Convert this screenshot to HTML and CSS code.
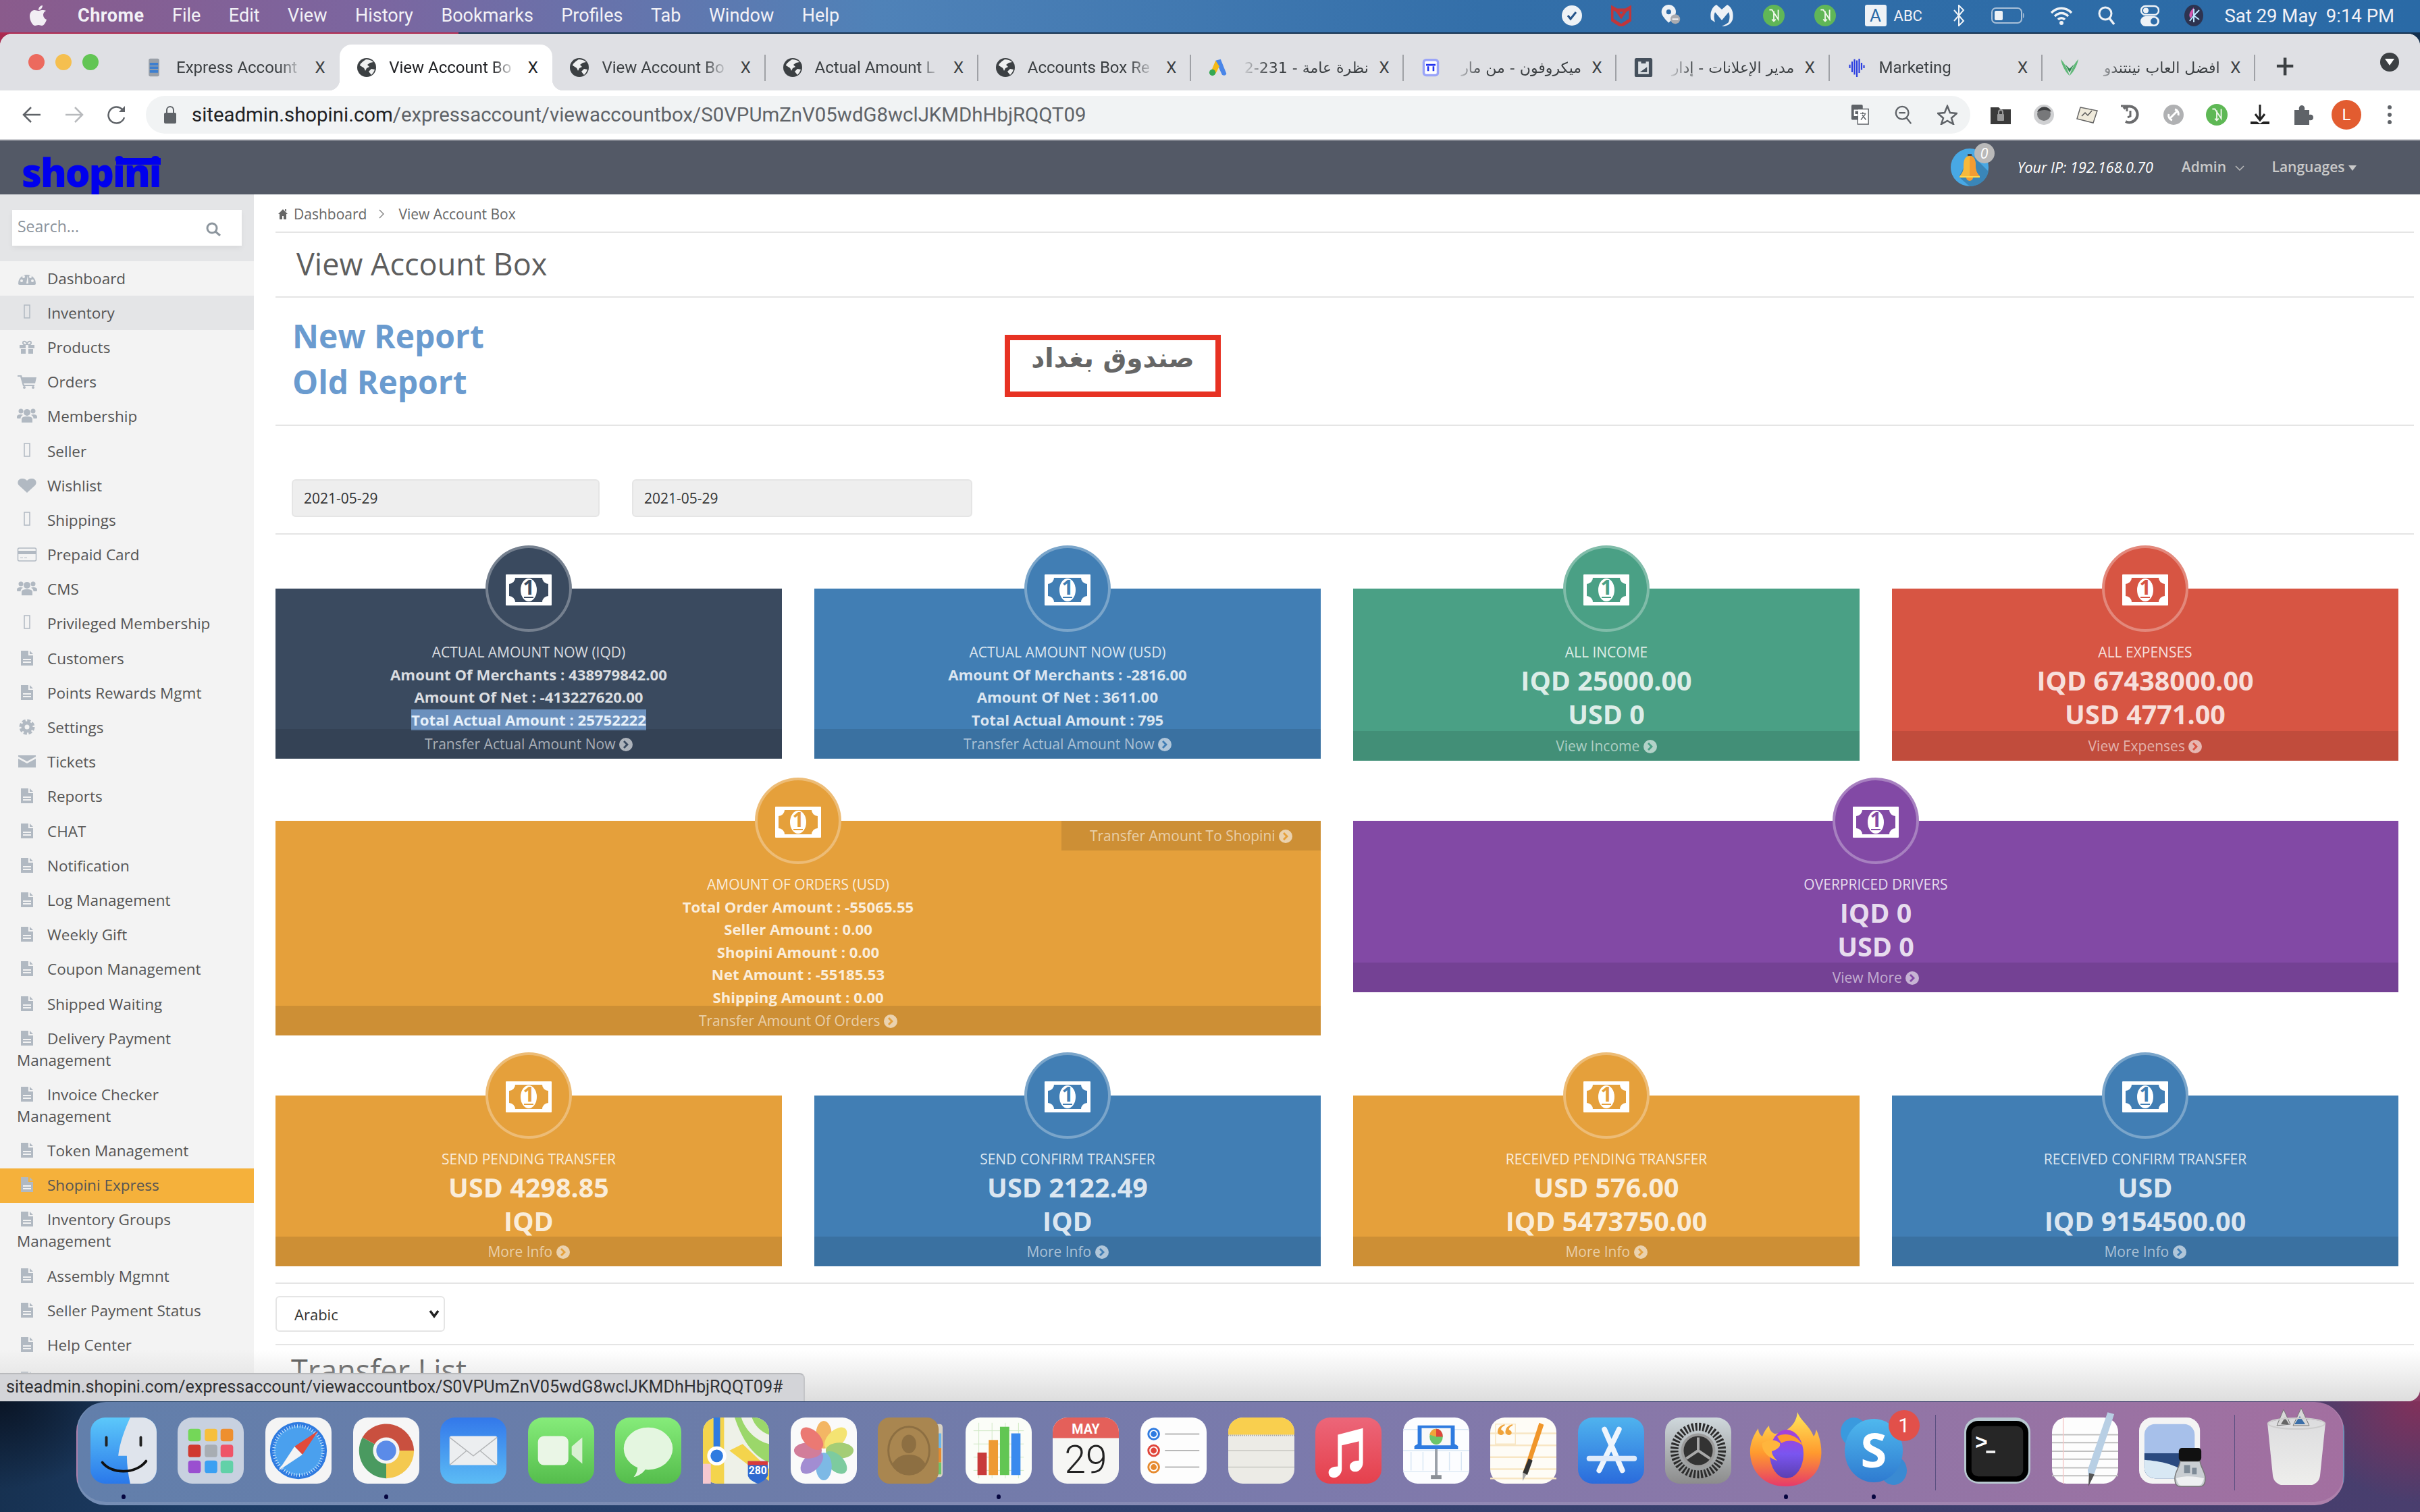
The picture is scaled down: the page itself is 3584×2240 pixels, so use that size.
FILE: index.html
```html
<!DOCTYPE html>
<html lang="en">
<head>
<meta charset="utf-8">
<title>View Account Box</title>
<link rel="stylesheet" href="styles.css">
</head>
<body>
<svg class="defs" aria-hidden="true">
  <defs>
    <linearGradient id="g-finder" x1="0" y1="0" x2="0" y2="1"><stop offset="0" stop-color="#5cc8fa"/><stop offset="1" stop-color="#2a78ea"/></linearGradient>
    <linearGradient id="g-mail" x1="0" y1="0" x2="0" y2="1"><stop offset="0" stop-color="#3378ea"/><stop offset="1" stop-color="#5cbcf5"/></linearGradient>
    <linearGradient id="g-green" x1="0" y1="0" x2="0" y2="1"><stop offset="0" stop-color="#86ec7a"/><stop offset="1" stop-color="#55bd4c"/></linearGradient>
    <linearGradient id="g-music" x1="0" y1="0" x2="0" y2="1"><stop offset="0" stop-color="#ec6679"/><stop offset="1" stop-color="#e5404c"/></linearGradient>
    <linearGradient id="g-store" x1="0" y1="0" x2="0" y2="1"><stop offset="0" stop-color="#4fb3ee"/><stop offset="1" stop-color="#2a6bdc"/></linearGradient>
    <linearGradient id="g-skype" x1="0" y1="0" x2="0" y2="1"><stop offset="0" stop-color="#4fb8ee"/><stop offset="1" stop-color="#2f7bd0"/></linearGradient>
    <linearGradient id="g-fox" x1="0" y1="0" x2="0" y2="1"><stop offset="0" stop-color="#ffe85a"/><stop offset=".55" stop-color="#ff9a2e"/><stop offset="1" stop-color="#e63a6a"/></linearGradient>
    <linearGradient id="g-fox2" x1="0" y1="0" x2="0" y2="1"><stop offset="0" stop-color="#a83fd8"/><stop offset=".5" stop-color="#7a55f0"/><stop offset="1" stop-color="#5b3fb0"/></linearGradient>
    <linearGradient id="g-prefs" x1="0" y1="0" x2="0" y2="1"><stop offset="0" stop-color="#cfd8dc"/><stop offset="1" stop-color="#8c8c8c"/></linearGradient>
    <linearGradient id="g-trash" x1="0" y1="0" x2="0" y2="1"><stop offset="0" stop-color="#dcdcde"/><stop offset="1" stop-color="#eeeeec"/></linearGradient>
    <symbol id="i-dash" viewBox="0 0 30 24"><path d="M2 20a13 13 0 1 1 26 0c0 1-.6 2-2 2H4c-1.400 0-2-1-2-2z"/><circle cx="7" cy="16" r="2" fill="#f3f3f3"/><circle cx="10" cy="10" r="2" fill="#f3f3f3"/><circle cx="20" cy="10" r="2" fill="#f3f3f3"/><circle cx="23" cy="16" r="2" fill="#f3f3f3"/><path d="M14 20l2-12 1 12z" fill="#f3f3f3"/></symbol>
    <symbol id="i-gift" viewBox="0 0 30 24"><path d="M4 9h22v5H4zM6 15h18v7H6z"/><path d="M10 4c3-1 5 2 5 5-3 0-6-1-6-3 0-1 0-2 1-2zM20 4c-3-1-5 2-5 5 3 0 6-1 6-3 0-1 0-2-1-2z" fill="none" stroke="currentColor" stroke-width="2"/><path d="M13 9h4v13h-4z" fill="#f3f3f3"/></symbol>
    <symbol id="i-cart" viewBox="0 0 30 24"><path d="M1 3h6l1 3h21l-2 9H10l1 2h15v2H9L5 5H1z"/><circle cx="11" cy="21" r="2"/><circle cx="24" cy="21" r="2"/></symbol>
    <symbol id="i-users" viewBox="0 0 30 24"><circle cx="15" cy="7" r="5"/><circle cx="6" cy="5" r="3.500"/><circle cx="24" cy="5" r="3.500"/><path d="M7 22v-5c0-3 3-4 8-4s8 1 8 4v5z"/><path d="M0 14c0-3 2-4 6-4 1 0 2 .3 3 .8C7 12 5.500 13.500 5.500 16H1c-.6 0-1-.8-1-2zM30 14c0-3-2-4-6-4-1 0-2 .3-3 .8 2 1.200 3.500 2.700 3.500 5.200H29c.6 0 1-.8 1-2z"/></symbol>
    <symbol id="i-heart" viewBox="0 0 30 24"><path d="M15 23L3 12C0 9 1 2 8 2c3 0 5 1 7 3 2-2 4-3 7-3 7 0 8 7 5 10z"/></symbol>
    <symbol id="i-card" viewBox="0 0 30 24"><rect x="1.500" y="3" width="27" height="19" rx="2" fill="none" stroke="currentColor" stroke-width="1.500"/><path d="M1 7h28v5H1zM5 17h4v1H5zM11 17h4v1h-4z"/></symbol>
    <symbol id="i-file" viewBox="0 0 30 24"><path d="M6 1h11v7h7v15H6z"/><path d="M19 1l5 5h-5z"/><path d="M9 13h12v2H9zM9 17h12v2H9z" fill="#f3f3f3"/></symbol>
    <symbol id="i-gear" viewBox="0 0 30 24"><circle cx="15" cy="12" r="6" fill="none" stroke="currentColor" stroke-width="5"/><circle cx="15" cy="12" r="9.500" fill="none" stroke="currentColor" stroke-width="4" stroke-dasharray="5 2.460"/></symbol>
    <symbol id="i-mail" viewBox="0 0 30 24"><path d="M2 3h26v2L15 12 2 5zM2 8l13 7 13-7v13H2z"/></symbol>
    <symbol id="i-tofu" viewBox="0 0 30 24"><rect x="11" y="1" width="8" height="19" fill="none" stroke="currentColor" stroke-width="1.500"/></symbol>
    <symbol id="i-money" viewBox="0 0 68 46"><rect width="68" height="46" rx="1" fill="#fff"/><path d="M14 5H54a9 9 0 0 0 9 9V32a9 9 0 0 0-9 9H14a9 9 0 0 0-9-9V14a9 9 0 0 0 9-9Z" fill="currentColor"/><ellipse cx="34" cy="23" rx="12" ry="17" fill="#fff"/><text x="34" y="30" text-anchor="middle" class="money-digit" fill="currentColor">1</text><path d="M27 33h14v2H27z" fill="currentColor"/></symbol>
    <symbol id="i-go" viewBox="0 0 20 20"><circle cx="10" cy="10" r="10" fill="currentColor"/><path d="M8 4l6 6-6 6-2-2 4-4-4-4z" fill="var(--chev,#3a4a5f)"/></symbol>
    <symbol id="i-globe" viewBox="0 0 28 28"><circle cx="14" cy="14" r="14" fill="#3c4043"/><path d="M13 2c-4 3-8 5-9 9l5 3c2 1 2 3 3 5l2-4 4-2-3-3 4-3 5-1c-3-3-7-4-11-4zM17 20l4 5c2-2 4-5 5-8l-5-1z" fill="#fff" opacity=".92"/></symbol>
  </defs>
</svg>

<header class="menubar">
  <svg class="apple" viewBox="0 0 26 30"><path fill="#f2eef4" d="M18 7c-2 0-3 1-5 1S9 7 7 7C3 7 0 11 0 16c0 6 4 14 8 14 2 0 3-1 5-1s3 1 5 1c3 0 6-5 7-9-3-1-5-4-5-7 0-3 2-5 4-6-1-1-3-1-6-1zM13 7c0-4 3-7 6-7 0 4-3 7-6 7z"/></svg>
  <nav class="menus">
    <span class="menu-app">Chrome</span><span>File</span><span>Edit</span><span>View</span><span>History</span><span>Bookmarks</span><span>Profiles</span><span>Tab</span><span>Window</span><span>Help</span>
  </nav>
  <div class="status-icons">
    <div class="status-left">
      <svg class="si w32" viewBox="0 0 32 32"><circle cx="16" cy="16" r="15" fill="#eef2f6"/><path d="M10 16l4 5 8-10" fill="none" stroke="#26558a" stroke-width="3"/></svg>
      <svg class="si w30" viewBox="0 0 30 32"><path d="M1 4l7 4h14l7-4v18l-14 9L1 22z" fill="none" stroke="#c0363a" stroke-width="5"/><path d="M8 8l7 10 7-10" fill="none" stroke="#c0363a" stroke-width="4"/></svg>
      <svg class="si w32" viewBox="0 0 32 36"><path d="M13 0a12 12 0 0 1 12 12c0 6-7 13-12 18C8 25 1 18 1 12A12 12 0 0 1 13 0z" fill="#eef2f6"/><circle cx="13" cy="12" r="4" fill="#2e6ca8"/><circle cx="24" cy="24" r="8" fill="#a9abb0"/><path d="M19 24h10" stroke="#fff" stroke-width="2"/></svg>
      <svg class="si w36" viewBox="0 0 36 32"><path d="M18 7L10 0C3 4 0 12 2 22l6 4c-2-6-2-11 0-15l10 12 10-12c2 4 2 9 0 15-2 2-6 4-10 6l3 0c6-1 11-4 13-10 2-10-1-18-8-22z" fill="#eef2f6"/></svg>
      <svg class="si w34" viewBox="0 0 34 34"><circle cx="17" cy="17" r="17" fill="#60b657"/><path d="M10 8h4l10 15V8M17 10v16m-3-3l3 3 3-3" fill="none" stroke="#eef6ea" stroke-width="2"/></svg>
      <svg class="si w34" viewBox="0 0 34 34"><circle cx="17" cy="17" r="17" fill="#60b657"/><path d="M10 8h4l10 15V8M17 10v16m-3-3l3 3 3-3" fill="none" stroke="#eef6ea" stroke-width="2"/></svg>
      <div class="input-source"><span class="si-a">A</span><span class="si-abc">ABC</span></div>
    </div>
    <div class="status-right">
      <svg class="si w22" viewBox="0 0 22 32"><path d="M4 8l14 16-7 7V1l7 7L4 24" fill="none" stroke="#eef2f6" stroke-width="2"/></svg>
      <svg class="si w50" viewBox="0 0 50 26"><rect x="1" y="2" width="44" height="22" rx="6" fill="none" stroke="#a9c0d8" stroke-width="2"/><rect x="5" y="6" width="12" height="14" rx="2" fill="#eef2f6"/><path d="M47 9c2 1 2 7 0 8z" fill="#a9c0d8"/></svg>
      <svg class="si w34" viewBox="0 0 34 28"><path d="M2 10c9-9 21-9 30 0M7 15c6-6 14-6 20 0M12 20c3-3 7-3 10 0" fill="none" stroke="#eef2f6" stroke-width="3.500"/><circle cx="17" cy="25" r="3" fill="#eef2f6"/></svg>
      <svg class="si w26" viewBox="0 0 26 28"><circle cx="11" cy="11" r="9" fill="none" stroke="#eef2f6" stroke-width="3"/><path d="M17 18l7 9" stroke="#eef2f6" stroke-width="3.500"/></svg>
      <svg class="si w28" viewBox="0 0 28 32"><rect x="1" y="2" width="26" height="13" rx="6.500" fill="none" stroke="#eef2f6" stroke-width="2.500"/><circle cx="8" cy="8.500" r="4" fill="#eef2f6"/><rect y="17" width="28" height="15" rx="7.500" fill="#eef2f6"/><circle cx="20" cy="24.500" r="5" fill="#2e6ca8"/></svg>
      <svg class="si w28" viewBox="0 0 28 32"><ellipse cx="14" cy="16" rx="14" ry="16" fill="#2d3350"/><path d="M14 4c-5 5-9 11-5 16 3-2 4-8 5-16z" fill="#d45ab0"/><path d="M14 16L22 8M14 16l8 6M14 16L8 24M14 6v20" stroke="#bfe6ff" stroke-width="2"/></svg>
    </div>
    <span class="clock">Sat 29 May&nbsp; 9:14 PM</span>
  </div>
</header>

<main class="window">
  <div class="tabstrip">
    <div class="lights"><i class="light red"></i><i class="light amber"></i><i class="light green"></i></div>
    <div class="tab">
      <svg class="fav" viewBox="0 0 28 36"><rect x="4" y="1" width="20" height="34" rx="3" fill="#9aa0a8"/><path d="M6 9h16v5H6zM6 16h16v5H6zM6 23h16v5H6z" fill="#3d7fd0"/></svg>
      <span class="tab-title">Express Account</span><span class="tab-x">X</span>
    </div>
    <div class="tab tab-active">
      <svg class="fav"><use href="#i-globe"/></svg>
      <span class="tab-title">View Account Bo</span><span class="tab-x">X</span>
    </div>
    <div class="tab tab-sep">
      <svg class="fav"><use href="#i-globe"/></svg>
      <span class="tab-title">View Account Bo</span><span class="tab-x">X</span>
    </div>
    <div class="tab tab-sep">
      <svg class="fav"><use href="#i-globe"/></svg>
      <span class="tab-title">Actual Amount L</span><span class="tab-x">X</span>
    </div>
    <div class="tab tab-sep">
      <svg class="fav"><use href="#i-globe"/></svg>
      <span class="tab-title">Accounts Box Re</span><span class="tab-x">X</span>
    </div>
    <div class="tab tab-sep">
      <svg class="fav" viewBox="0 0 30 28"><path d="M11 3l8-2 9 22c1 3-5 5-7 2z" fill="#4a86e8"/><path d="M11 3l6 9-6 12-7-4z" fill="#f5ba18"/><circle cx="6" cy="22" r="5" fill="#34a853"/></svg>
      <span class="tab-title tab-rtl" dir="rtl">نظرة عامة - 231-2</span><span class="tab-x">X</span>
    </div>
    <div class="tab tab-sep">
      <svg class="fav" viewBox="0 0 30 32"><rect x="1" y="1" width="28" height="30" rx="6" fill="#9aa4f8"/><rect x="5" y="5" width="20" height="22" rx="2" fill="#fff"/><path d="M7 10h16v3H7zM9 14h3v8H9zM18 14h3v8h-3z" fill="#2233ee"/></svg>
      <span class="tab-title tab-rtl" dir="rtl">ميكروفون - من مار</span><span class="tab-x">X</span>
    </div>
    <div class="tab tab-sep">
      <svg class="fav" viewBox="0 0 30 32"><rect width="30" height="32" rx="3" fill="#45505c"/><path d="M6 6h18v21H6z" fill="#dde1e5"/><path d="M11 3h8v6h-8z" fill="#45505c"/><path d="M9 24l12-9v9z" fill="#45505c"/></svg>
      <span class="tab-title tab-rtl" dir="rtl">مدير الإعلانات - إدار</span><span class="tab-x">X</span>
    </div>
    <div class="tab tab-sep">
      <svg class="fav" viewBox="0 0 28 32"><path d="M2 11v6M6 6v18M10 2v26M14 4v28M18 1v24M22 8v12M26 12v5" stroke="#2b3fe0" stroke-width="2.500"/></svg>
      <span class="tab-title">Marketing</span><span class="tab-x">X</span>
    </div>
    <div class="tab tab-sep">
      <svg class="fav" viewBox="0 0 30 28"><path d="M1 1c6 6 10 14 14 26C19 15 23 7 29 1c-2 10-7 20-14 26C8 21 3 11 1 1z" fill="#5fb878"/><path d="M8 9l7 13 7-13-7 7z" fill="#2f8a50"/></svg>
      <span class="tab-title tab-rtl" dir="rtl">افضل العاب نينتندو</span><span class="tab-x">X</span>
    </div>
    <span class="tab-plus">+</span>
    <span class="tab-menu"><i class="tab-menu-caret"></i></span>
  </div>

  <div class="toolbar">
    <svg class="tb tb-nav" viewBox="0 0 30 30"><path d="M28 15H4M14 4L3 15l11 11" fill="none" stroke="#5f6368" stroke-width="2.500"/></svg>
    <svg class="tb tb-nav" viewBox="0 0 30 30"><path d="M2 15h24M16 4l11 11-11 11" fill="none" stroke="#b8babd" stroke-width="2.500"/></svg>
    <svg class="tb tb-nav" viewBox="0 0 30 30"><path d="M26 19a12 12 0 1 1-3-12l3 3" fill="none" stroke="#5f6368" stroke-width="2.500"/><path d="M27 2v9h-9z" fill="#5f6368"/></svg>
    <div class="omnibox">
      <svg class="lock" viewBox="0 0 20 26"><rect y="10" width="18" height="16" rx="2" fill="#5f6368"/><path d="M4 10V6a5 5 0 0 1 10 0v4" fill="none" stroke="#5f6368" stroke-width="2"/></svg>
      <span class="url"><b class="url-host">siteadmin.shopini.com</b>/expressaccount/viewaccountbox/S0VPUmZnV05wdG8wclJKMDhHbjRQQT09</span>
      <div class="omni-actions">
        <svg class="tb w28" viewBox="0 0 28 32"><rect width="18" height="24" rx="2" fill="#5f6368"/><path d="M10 7h17v24H10z" fill="#fff" stroke="#5f6368" stroke-width="1.500"/><path d="M14 14h9M18 12v3M15 24l7-9M17 16l6 8" stroke="#5f6368" stroke-width="1.500"/><path d="M4 8h7v2H6v5h4v3H4z" fill="#fff"/></svg>
        <svg class="tb w28" viewBox="0 0 28 32"><circle cx="12" cy="13" r="10" fill="none" stroke="#5f6368" stroke-width="2.500"/><path d="M7 13h10M19 21l7 9" stroke="#5f6368" stroke-width="2.500"/></svg>
        <svg class="tb w30" viewBox="0 0 30 30"><path d="M15 2l4 10 10 1-8 7 3 9-9-5-9 5 3-9-8-7 10-1z" fill="none" stroke="#5f6368" stroke-width="2.500"/></svg>
      </div>
    </div>
    <div class="extensions">
      <svg class="ext" viewBox="0 0 32 32"><path d="M1 5h12l3 3h15v22H1z" fill="#3a3a3a"/><rect x="11" y="15" width="10" height="10" rx="1" fill="#999"/><path d="M13 15v-3a3 3 0 0 1 6 0v3" fill="none" stroke="#999" stroke-width="2"/></svg>
      <svg class="ext" viewBox="0 0 32 32"><circle cx="16" cy="16" r="15" fill="#cfd0d2"/><circle cx="16" cy="15" r="10" fill="#77787a"/><path d="M6 12a11 11 0 0 1 21 0c-6-4-14-4-21 0z" fill="#3f4042"/></svg>
      <svg class="ext" viewBox="0 0 32 32"><path d="M6 5l25 5-6 18-24-6z" fill="#efeadb" stroke="#666" stroke-width="1.500"/><path d="M8 18l5-5 4 4 6-7" fill="none" stroke="#555" stroke-width="1.500"/></svg>
      <svg class="ext" viewBox="0 0 32 32"><path d="M6 7a12 12 0 1 1 3 19" fill="none" stroke="#6a6b6d" stroke-width="4"/><path d="M2 3h9v8" fill="none" stroke="#6a6b6d" stroke-width="3"/><path d="M16 10v8l-4 2" fill="none" stroke="#6a6b6d" stroke-width="3"/></svg>
      <svg class="ext" viewBox="0 0 32 32"><circle cx="16" cy="16" r="15" fill="#b0b1b3"/><path d="M10 22L22 10M18 8a7 7 0 0 1 5 9M14 24a7 7 0 0 1-5-9" fill="none" stroke="#fff" stroke-width="3"/></svg>
      <svg class="ext" viewBox="0 0 34 34"><circle cx="17" cy="17" r="17" fill="#5eb855"/><path d="M10 8h4l10 15V8M17 10v16m-3-3l3 3 3-3" fill="none" stroke="#eef6ea" stroke-width="2"/></svg>
      <svg class="ext" viewBox="0 0 32 32"><path d="M16 1v22M9 15l7 9 7-9" fill="none" stroke="#222" stroke-width="3"/><path d="M2 26h9l5 3 5-3h9v4H2z" fill="#222"/></svg>
      <svg class="ext" viewBox="0 0 32 32"><path d="M3 9h7c-1-4 1-7 4-7s5 3 4 7h7v7c4-1 6 1 6 4s-2 5-6 4v7H3z" fill="#5f6368"/></svg>
      <span class="avatar">L</span>
      <span class="kebab"><i></i><i></i><i></i></span>
    </div>
  </div>

  <div class="topbar">
    <a class="logo">shopini</a>
    <div class="topbar-right">
      <div class="bell">
        <svg viewBox="0 0 56 56"><circle cx="28" cy="28" r="28" fill="#48a8e4"/><path d="M30 8l26 26A28 28 0 0 1 28 56L12 42z" fill="#3a86b8"/><rect x="25" y="8" width="6" height="6" fill="#444"/><path d="M28 11c-8 0-9 8-9 16 0 7-3 11-6 14h30c-3-3-6-7-6-14 0-8-1-16-9-16z" fill="#f6b93b"/><path d="M28 11c8 0 9 8 9 16 0 7 3 11 6 14H28z" fill="#f39c33"/><path d="M13 41h30v2H13z" fill="#ffd84d"/><path d="M23 43h10a5 5 0 0 1-10 0z" fill="#f39c33"/></svg>
        <span class="bell-count">0</span>
      </div>
      <span class="ip">Your IP: 192.168.0.70</span>
      <span class="top-link">Admin <svg class="chev-sm" viewBox="0 0 14 8"><path d="M1 1l6 6 6-6" fill="none" stroke="#bbb" stroke-width="1.500"/></svg></span>
      <span class="top-link">Languages <i class="caret"></i></span>
    </div>
  </div>

  <div class="page">
    <aside class="sidebar">
      <div class="search">
        <div class="search-box"><span>Search...</span><svg viewBox="0 0 24 22"><circle cx="10" cy="9" r="7" fill="none" stroke="#8d969e" stroke-width="3"/><path d="M15 14l7 6" stroke="#8d969e" stroke-width="3"/></svg></div>
      </div>
      <nav class="nav">
        <a class="nav-item"><svg><use href="#i-dash"/></svg>Dashboard</a>
        <a class="nav-item nav-hover"><svg><use href="#i-tofu"/></svg>Inventory</a>
        <a class="nav-item"><svg><use href="#i-gift"/></svg>Products</a>
        <a class="nav-item"><svg><use href="#i-cart"/></svg>Orders</a>
        <a class="nav-item"><svg><use href="#i-users"/></svg>Membership</a>
        <a class="nav-item"><svg><use href="#i-tofu"/></svg>Seller</a>
        <a class="nav-item"><svg><use href="#i-heart"/></svg>Wishlist</a>
        <a class="nav-item"><svg><use href="#i-tofu"/></svg>Shippings</a>
        <a class="nav-item"><svg><use href="#i-card"/></svg>Prepaid Card</a>
        <a class="nav-item"><svg><use href="#i-users"/></svg>CMS</a>
        <a class="nav-item"><svg><use href="#i-tofu"/></svg>Privileged Membership</a>
        <a class="nav-item"><svg><use href="#i-file"/></svg>Customers</a>
        <a class="nav-item"><svg><use href="#i-file"/></svg>Points Rewards Mgmt</a>
        <a class="nav-item"><svg><use href="#i-gear"/></svg>Settings</a>
        <a class="nav-item"><svg><use href="#i-mail"/></svg>Tickets</a>
        <a class="nav-item"><svg><use href="#i-file"/></svg>Reports</a>
        <a class="nav-item"><svg><use href="#i-file"/></svg>CHAT</a>
        <a class="nav-item"><svg><use href="#i-file"/></svg>Notification</a>
        <a class="nav-item"><svg><use href="#i-file"/></svg>Log Management</a>
        <a class="nav-item"><svg><use href="#i-file"/></svg>Weekly Gift</a>
        <a class="nav-item"><svg><use href="#i-file"/></svg>Coupon Management</a>
        <a class="nav-item"><svg><use href="#i-file"/></svg>Shipped Waiting</a>
        <a class="nav-item"><svg><use href="#i-file"/></svg>Delivery Payment Management</a>
        <a class="nav-item"><svg><use href="#i-file"/></svg>Invoice Checker Management</a>
        <a class="nav-item"><svg><use href="#i-file"/></svg>Token Management</a>
        <a class="nav-item nav-active"><svg><use href="#i-file"/></svg>Shopini Express</a>
        <a class="nav-item"><svg><use href="#i-file"/></svg>Inventory Groups Management</a>
        <a class="nav-item"><svg><use href="#i-file"/></svg>Assembly Mgmnt</a>
        <a class="nav-item"><svg><use href="#i-file"/></svg>Seller Payment Status</a>
        <a class="nav-item"><svg><use href="#i-file"/></svg>Help Center</a>
        <a class="nav-item"><svg><use href="#i-file"/></svg></a>
      </nav>
    </aside>

    <section class="content">
      <div class="crumbs">
        <svg class="home" viewBox="0 0 14 16"><path d="M7 1l7 7h-2v8H8v-5H6v5H2V8H0zM10 1h2v4l-2-2z" fill="#666"/></svg>
        <span>Dashboard</span><svg class="crumb-sep" viewBox="0 0 8 14"><path d="M1 1l6 6-6 6" fill="none" stroke="#777" stroke-width="1.200"/></svg><span>View Account Box</span>
      </div>
      <h1 class="title">View Account Box</h1>
      <div class="reports">
        <div class="report-links">
          <a>New Report</a>
          <a>Old Report</a>
        </div>
        <div class="box-name" dir="rtl">صندوق بغداد</div>
      </div>
      <div class="filters">
        <input class="date date-a" value="2021-05-29" readonly>
        <input class="date date-b" value="2021-05-29" readonly>
      </div>

      <div class="cards">
        <article class="card navy h252">
          <span class="coin"><svg><use href="#i-money"/></svg></span>
          <div class="card-body">
            <p class="card-title">ACTUAL AMOUNT NOW (IQD)</p>
            <p class="line">Amount Of Merchants : 438979842.00</p>
            <p class="line">Amount Of Net : -413227620.00</p>
            <p class="line"><span class="selected">Total Actual Amount : 25752222</span></p>
          </div>
          <a class="card-foot">Transfer Actual Amount Now <svg><use href="#i-go"/></svg></a>
        </article>
        <article class="card blue h252">
          <span class="coin"><svg><use href="#i-money"/></svg></span>
          <div class="card-body">
            <p class="card-title">ACTUAL AMOUNT NOW (USD)</p>
            <p class="line">Amount Of Merchants : -2816.00</p>
            <p class="line">Amount Of Net : 3611.00</p>
            <p class="line">Total Actual Amount : 795</p>
          </div>
          <a class="card-foot">Transfer Actual Amount Now <svg><use href="#i-go"/></svg></a>
        </article>
        <article class="card green h255">
          <span class="coin"><svg><use href="#i-money"/></svg></span>
          <div class="card-body">
            <p class="card-title">ALL INCOME</p>
            <p class="big">IQD 25000.00</p>
            <p class="big">USD 0</p>
          </div>
          <a class="card-foot">View Income <svg><use href="#i-go"/></svg></a>
        </article>
        <article class="card red h255">
          <span class="coin"><svg><use href="#i-money"/></svg></span>
          <div class="card-body">
            <p class="card-title">ALL EXPENSES</p>
            <p class="big">IQD 67438000.00</p>
            <p class="big">USD 4771.00</p>
          </div>
          <a class="card-foot">View Expenses <svg><use href="#i-go"/></svg></a>
        </article>

        <article class="card orange wide h318">
          <span class="coin"><svg><use href="#i-money"/></svg></span>
          <a class="card-corner">Transfer Amount To Shopini <svg><use href="#i-go"/></svg></a>
          <div class="card-body">
            <p class="card-title">AMOUNT OF ORDERS (USD)</p>
            <p class="line">Total Order Amount : -55065.55</p>
            <p class="line">Seller Amount : 0.00</p>
            <p class="line">Shopini Amount : 0.00</p>
            <p class="line">Net Amount : -55185.53</p>
            <p class="line">Shipping Amount : 0.00</p>
          </div>
          <a class="card-foot">Transfer Amount Of Orders <svg><use href="#i-go"/></svg></a>
        </article>
        <article class="card purple wide h254">
          <span class="coin"><svg><use href="#i-money"/></svg></span>
          <div class="card-body">
            <p class="card-title">OVERPRICED DRIVERS</p>
            <p class="big">IQD 0</p>
            <p class="big">USD 0</p>
          </div>
          <a class="card-foot">View More <svg><use href="#i-go"/></svg></a>
        </article>

        <article class="card orange h253">
          <span class="coin"><svg><use href="#i-money"/></svg></span>
          <div class="card-body">
            <p class="card-title">SEND PENDING TRANSFER</p>
            <p class="big">USD 4298.85</p>
            <p class="big">IQD</p>
          </div>
          <a class="card-foot">More Info <svg><use href="#i-go"/></svg></a>
        </article>
        <article class="card blue h253">
          <span class="coin"><svg><use href="#i-money"/></svg></span>
          <div class="card-body">
            <p class="card-title">SEND CONFIRM TRANSFER</p>
            <p class="big">USD 2122.49</p>
            <p class="big">IQD</p>
          </div>
          <a class="card-foot">More Info <svg><use href="#i-go"/></svg></a>
        </article>
        <article class="card orange h253">
          <span class="coin"><svg><use href="#i-money"/></svg></span>
          <div class="card-body">
            <p class="card-title">RECEIVED PENDING TRANSFER</p>
            <p class="big">USD 576.00</p>
            <p class="big">IQD 5473750.00</p>
          </div>
          <a class="card-foot">More Info <svg><use href="#i-go"/></svg></a>
        </article>
        <article class="card blue h253">
          <span class="coin"><svg><use href="#i-money"/></svg></span>
          <div class="card-body">
            <p class="card-title">RECEIVED CONFIRM TRANSFER</p>
            <p class="big">USD</p>
            <p class="big">IQD 9154500.00</p>
          </div>
          <a class="card-foot">More Info <svg><use href="#i-go"/></svg></a>
        </article>
      </div>

      <div class="lang-row">
        <div class="lang-select">
          <select class="lang"><option>Arabic</option><option>English</option></select>
          <svg viewBox="0 0 16 16"><path d="M2 4l6 8 6-8" fill="none" stroke="#222" stroke-width="3.500"/></svg>
        </div>
      </div>
      <h2 class="list-title">Transfer List</h2>
    </section>
    <div class="bottom-fade"></div>
  </div>
  <div class="statusbar">siteadmin.shopini.com/expressaccount/viewaccountbox/S0VPUmZnV05wdG8wclJKMDhHbjRQQT09#</div>
</main>

<footer class="desk">
  <div class="dock">
    <div class="slot running"><svg class="app" viewBox="0 0 100 100"><rect width="100" height="100" rx="22" fill="url(#g-finder)"/><path d="M60 0h18a22 22 0 0 1 22 22v56a22 22 0 0 1-22 22H60c-3-14-5-28-5-42H42C44 38 52 18 60 0z" fill="#dfe4ec"/><path d="M24 30v12M76 30v12" stroke="#222" stroke-width="4" stroke-linecap="round"/><path d="M18 68c14 18 50 18 66-2" fill="none" stroke="#111" stroke-width="4" stroke-linecap="round"/></svg></div>
    <div class="slot"><svg class="app" viewBox="0 0 100 100"><rect width="100" height="100" rx="22" fill="#c8d1e0"/><g><rect x="16" y="17" width="19" height="19" rx="4" fill="#74d758"/><rect x="41" y="17" width="19" height="19" rx="4" fill="#f6bf3c"/><rect x="65" y="17" width="19" height="19" rx="4" fill="#ee8f2f"/><rect x="16" y="41" width="19" height="19" rx="4" fill="#d0392f"/><rect x="41" y="41" width="19" height="19" rx="4" fill="#a8adb3"/><rect x="65" y="41" width="19" height="19" rx="4" fill="#ef5468"/><rect x="16" y="65" width="19" height="19" rx="4" fill="#9a4fd0"/><rect x="41" y="65" width="19" height="19" rx="4" fill="#3aa0f2"/><rect x="65" y="65" width="19" height="19" rx="4" fill="#62d1a8"/></g></svg></div>
    <div class="slot"><svg class="app" viewBox="0 0 100 100"><rect width="100" height="100" rx="22" fill="#f4f4f4"/><circle cx="50" cy="50" r="43" fill="#2f7be0"/><circle cx="50" cy="50" r="37" fill="#4aa0ee" stroke="#d8ecff" stroke-width="5" stroke-dasharray="1 3"/><path d="M80 20L44 44l12 12z" fill="#e24a3b"/><path d="M20 80l24-36 12 12z" fill="#f4f4f4"/></svg></div>
    <div class="slot running"><svg class="app" viewBox="0 0 100 100"><rect width="100" height="100" rx="22" fill="#f6f6f6"/><path d="M50 50L92 50A42 42 0 0 0 14 30z" fill="#c9503f"/><path d="M50 50L50 92A42 42 0 0 0 92 50z" fill="#f4c94f"/><path d="M50 50L14 30A42 42 0 0 0 50 92z" fill="#4a9a60"/><circle cx="50" cy="50" r="20" fill="#f4f4f4"/><circle cx="50" cy="50" r="15" fill="#5b8be8"/></svg></div>
    <div class="slot"><svg class="app" viewBox="0 0 100 100"><rect width="100" height="100" rx="22" fill="url(#g-mail)"/><rect x="14" y="28" width="72" height="44" rx="3" fill="#eceef0"/><path d="M14 30l36 28 36-28M14 72l26-22M86 72L60 50" fill="none" stroke="#b4b6b8" stroke-width="1.500"/></svg></div>
    <div class="slot"><svg class="app" viewBox="0 0 100 100"><rect width="100" height="100" rx="22" fill="url(#g-green)"/><rect x="15" y="28" width="46" height="44" rx="9" fill="#eaf6e6"/><path d="M66 44l16-14v40L66 56z" fill="#d8f0d2"/></svg></div>
    <div class="slot"><svg class="app" viewBox="0 0 100 100"><rect width="100" height="100" rx="22" fill="url(#g-green)"/><ellipse cx="50" cy="47" rx="37" ry="32" fill="#e4f6e0"/><path d="M34 72c0 8-2 14-6 18 8-2 14-6 18-12z" fill="#e4f6e0"/></svg></div>
    <div class="slot"><svg class="app" viewBox="0 0 100 100"><rect width="100" height="100" rx="22" fill="#eef1e8"/><path d="M0 22A22 22 0 0 1 22 0h10v100H22A22 22 0 0 1 0 78z" fill="#f4d44c"/><path d="M40 50l60 46V78L60 40z" fill="#f4d44c"/><path d="M48 0h30a22 22 0 0 1 22 22v46C74 58 58 30 48 0z" fill="#9bd76a"/><path d="M58 0h16c4 12 14 22 26 26v14C82 36 64 20 58 0z" fill="#eef1e8"/><rect x="16" y="0" width="10" height="44" fill="#2f7be0"/><circle cx="21" cy="58" r="12" fill="#2f7be0" stroke="#fff" stroke-width="5"/><path d="M0 70h12v30H0z" fill="#f5c8d0"/><path d="M68 66h30v22c-4 8-10 10-15 12-7-3-13-6-15-12z" fill="#2f6ad0"/><path d="M68 66h30v6H68z" fill="#d83a3a"/><text x="83" y="86" text-anchor="middle" class="dock-shield">280</text></svg></div>
    <div class="slot"><svg class="app" viewBox="0 0 100 100"><rect width="100" height="100" rx="22" fill="#fafafa"/><g opacity=".78"><ellipse cx="50" cy="26" rx="12" ry="21" fill="#f2a33a"/><ellipse cx="68" cy="32" rx="12" ry="21" fill="#f3dd4c" transform="rotate(45 68 32)"/><ellipse cx="74" cy="50" rx="21" ry="12" fill="#8cc152"/><ellipse cx="68" cy="68" rx="12" ry="21" fill="#5bbf86" transform="rotate(-45 68 68)"/><ellipse cx="50" cy="74" rx="12" ry="21" fill="#5aa7e0"/><ellipse cx="32" cy="68" rx="12" ry="21" fill="#8a6fc8" transform="rotate(45 32 68)"/><ellipse cx="26" cy="50" rx="21" ry="12" fill="#c85a80"/><ellipse cx="32" cy="32" rx="12" ry="21" fill="#e8554e" transform="rotate(-45 32 32)"/></g></svg></div>
    <div class="slot"><svg class="app" viewBox="0 0 100 100"><path d="M88 10h6c3 0 4 3 4 6v68c0 3-1 6-4 6h-6z" fill="#d8d2c4"/><path d="M88 24h8v22h-8z" fill="#6ab6ec"/><path d="M88 46h8v22h-8z" fill="#e68a2e"/><path d="M88 68h8v18h-8z" fill="#6cc56a"/><rect width="92" height="100" rx="18" fill="#a98650"/><ellipse cx="47" cy="50" rx="31" ry="36" fill="none" stroke="#8d6f42" stroke-width="3"/><ellipse cx="47" cy="40" rx="11" ry="14" fill="#8d6f42"/><path d="M22 70c6-10 14-14 25-14s19 4 25 14c-6 10-14 15-25 15s-19-5-25-15z" fill="#8d6f42"/></svg></div>
    <div class="slot running"><svg class="app" viewBox="0 0 100 100"><rect width="100" height="100" rx="22" fill="#fbfdf8"/><path d="M12 20h76M12 40h76M12 60h76M12 80h76M20 8v84M40 8v84M60 8v84M80 8v84" stroke="#cfe8c4" stroke-width="1"/><rect x="18" y="53" width="14" height="34" fill="#c83a3a"/><rect x="35" y="34" width="14" height="53" fill="#ee9a34"/><rect x="52" y="14" width="14" height="73" fill="#62c653"/><rect x="69" y="24" width="14" height="63" fill="#3a8aee"/></svg></div>
    <div class="slot"><svg class="app" viewBox="0 0 100 100"><rect width="100" height="100" rx="22" fill="#f6f6f4"/><path d="M0 31V22A22 22 0 0 1 22 0h56a22 22 0 0 1 22 22v9z" fill="#e4605a"/><text x="50" y="24" text-anchor="middle" class="cal-month">MAY</text><text x="50" y="84" text-anchor="middle" class="cal-day">29</text></svg></div>
    <div class="slot"><svg class="app" viewBox="0 0 100 100"><rect width="100" height="100" rx="22" fill="#fdfdfd"/><circle cx="20" cy="25" r="8" fill="#fff" stroke="#2f7be0" stroke-width="3"/><circle cx="20" cy="25" r="4.500" fill="#2f7be0"/><circle cx="20" cy="50" r="8" fill="#fff" stroke="#e0453a" stroke-width="3"/><circle cx="20" cy="50" r="4.500" fill="#e0453a"/><circle cx="20" cy="75" r="8" fill="#fff" stroke="#e68a2e" stroke-width="3"/><circle cx="20" cy="75" r="4.500" fill="#e68a2e"/><path d="M37 25h52M37 50h52M37 75h52" stroke="#b8b8b8" stroke-width="2"/></svg></div>
    <div class="slot"><svg class="app" viewBox="0 0 100 100"><rect width="100" height="100" rx="22" fill="#ecebe6"/><path d="M0 26V22A22 22 0 0 1 22 0h56a22 22 0 0 1 22 22v4z" fill="#f9cf4e"/><path d="M0 27h100" stroke="#a8a8a0" stroke-width="2" stroke-dasharray="1.500 1.500"/><path d="M0 50h100M0 75h100" stroke="#c8c8c2" stroke-width="1.500"/></svg></div>
    <div class="slot"><svg class="app" viewBox="0 0 100 100"><rect width="100" height="100" rx="22" fill="url(#g-music)"/><path d="M72 16v52c0 8-6 14-12 14-5 0-8-4-8-8 0-6 6-9 14-9V36l-26 6v36c0 7-6 13-12 13-5 0-8-3-8-8 0-6 6-9 14-9V26z" fill="#fff"/></svg></div>
    <div class="slot"><svg class="app" viewBox="0 0 100 100"><rect width="100" height="100" rx="22" fill="#fcfdff"/><path d="M0 18h100M0 50h100M0 82h100M12 52v28M30 52v28M70 52v28M88 52v28" stroke="#d8e6f4" stroke-width="1.500"/><path d="M22 12h56v28l5 3v5H17v-5l5-3z" fill="#2f7be0"/><path d="M28 16h44v26H28z" fill="#f8f8f8"/><ellipse cx="50" cy="29" rx="10" ry="12" fill="#6cc56a"/><path d="M50 17a10 12 0 0 1 10 12H50z" fill="#e0453a"/><path d="M50 17v12L40 26a10 12 0 0 1 10-9z" fill="#f2a33a"/><rect x="48" y="48" width="4" height="40" fill="#9aa0a8"/><rect x="42" y="87" width="16" height="6" fill="#8a8f96"/></svg></div>
    <div class="slot"><svg class="app" viewBox="0 0 100 100"><rect width="100" height="100" rx="22" fill="#fefcf6"/><path d="M0 24h100M0 42h100M0 60h100M0 78h100M0 92h100" stroke="#f8e6c4" stroke-width="2.500"/><rect x="8" y="10" width="30" height="30" fill="none" stroke="#f8e6c4" stroke-width="1.500"/><text x="22" y="46" text-anchor="middle" class="pages-quote">“</text><path d="M74 8l7 3-25 74-6-3z" fill="#f0962a"/><path d="M58 62l6 3-8 22-7-3z" fill="#333"/><path d="M49 83l6 3-6 10z" fill="#aaa"/></svg></div>
    <div class="slot"><svg class="app" viewBox="0 0 100 100"><rect width="100" height="100" rx="22" fill="url(#g-store)"/><path d="M62 18L32 80M40 18l27 62" stroke="#eef5fd" stroke-width="8" stroke-linecap="round" fill="none"/><path d="M17 62h68" stroke="#dfeafa" stroke-width="8" stroke-linecap="round"/></svg></div>
    <div class="slot"><svg class="app" viewBox="0 0 100 100"><rect width="100" height="100" rx="22" fill="url(#g-prefs)"/><circle cx="50" cy="50" r="36" fill="none" stroke="#2c2c2c" stroke-width="12" stroke-dasharray="3 2.500"/><circle cx="50" cy="50" r="26" fill="#9c9c9c"/><circle cx="50" cy="50" r="22" fill="#333"/><path d="M50 50V30M50 50L32 62M50 50l18 12" stroke="#aaa" stroke-width="4"/></svg></div>
    <div class="slot running"><svg class="app app-fox" viewBox="0 0 106 110"><path d="M70 0c4 12 18 20 24 36 3-4 2-4 4-10 8 18 10 38 4 54-8 20-28 30-50 30C24 110 2 92 0 62c-1-14 4-26 12-38 0 6 3 10 6 12 2-6 6-12 10-16 0 6 4 10 8 12C46 32 68 24 70 0z" fill="url(#g-fox)"/><ellipse cx="54" cy="62" rx="25" ry="36" fill="url(#g-fox2)"/><path d="M18 46c8-6 20-6 26 0 2 6-6 10-12 12 0 6 6 12 8 14-12-4-24-14-22-26z" fill="#ffb53d"/><path d="M40 36c10-6 30-4 38 14-8-8-22-10-32-4z" fill="#ff9a2e"/></svg></div>
    <div class="slot running"><div class="skype"><svg class="app" viewBox="0 0 100 100"><ellipse cx="20" cy="22" rx="20" ry="22" fill="#3a9ade"/><ellipse cx="80" cy="80" rx="20" ry="22" fill="#3a8ad2"/><ellipse cx="50" cy="50" rx="44" ry="48" fill="url(#g-skype)"/><text x="50" y="76" text-anchor="middle" class="skype-s">S</text></svg><span class="dock-badge">1</span></div></div>
    <div class="dock-div"></div>
    <div class="slot"><svg class="app" viewBox="0 0 100 100"><rect width="100" height="100" rx="22" fill="#b8c8d0"/><rect x="3" y="5" width="94" height="92" rx="18" fill="#000"/><rect x="11" y="13" width="78" height="76" rx="10" fill="#262626"/><text x="26" y="48" text-anchor="middle" class="term">&gt;</text><path d="M33 50h14v4H33z" fill="#eee"/></svg></div>
    <div class="slot"><svg class="app" viewBox="0 0 100 100"><rect width="100" height="100" rx="22" fill="#fdfdfd"/><path d="M0 26h100M0 38h100M0 51h100M0 63h100M0 76h100M0 88h100" stroke="#c0c0c0" stroke-width="2"/><path d="M17 0v100" stroke="#f4c8c8" stroke-width="1.500"/><path d="M84 -8l10 3-30 90-9 3-1-9z" fill="#b8cfe4"/><path d="M56 84l8 2-9 18z" fill="#555"/></svg></div>
    <div class="slot"><svg class="app" viewBox="0 0 100 100"><rect width="92" height="100" rx="20" fill="#f4f4f4"/><path d="M8 26A16 16 0 0 1 24 10h44a16 16 0 0 1 16 16v66H24A16 16 0 0 1 8 76z" fill="#a7c0ea"/><path d="M8 54h76v38H24A16 16 0 0 1 8 76z" fill="#2a4a80"/><path d="M8 64c24 2 50 6 76 28H24A16 16 0 0 1 8 76z" fill="#d8e8f4"/><path d="M62 66h30c1 10 8 16 8 26 0 6-2 12-8 12H62c-6 0-8-6-8-12 0-10 7-16 8-26z" fill="#c9ced2" stroke="#777" stroke-width="1.500"/><path d="M56 92c8-4 28-4 42 0-2 6-4 11-8 11H64c-4 0-6-5-8-11z" fill="#eef0f1"/><path d="M68 72h9v12h-9zM80 76h7v10h-7z" fill="#7d8a96"/><rect x="60" y="46" width="34" height="20" rx="5" fill="#111"/></svg></div>
    <div class="dock-div"></div>
    <div class="slot"><svg class="app app-trash" viewBox="0 0 86 116"><path d="M0 24c14-8 72-8 86 0l-8 78c-1 8-6 12-12 14H20c-6-2-11-6-12-14z" fill="url(#g-trash)"/><path d="M14 28L24 4l10 22zM38 28l12-26 12 26z" fill="#d8d8d8" stroke="#777"/><path d="M40 26l8-12 8 12z" fill="#3a6ea8"/><path d="M20 26l6-10 6 10z" fill="#666"/><ellipse cx="43" cy="25" rx="42" ry="8" fill="none" stroke="#ccc" stroke-width="2"/></svg></div>
  </div>
</footer>
</body>
</html>
```

FILE: styles.css
```css
* { box-sizing: border-box; }
html, body { margin: 0; padding: 0; }
body {
  width: 3584px;
  height: 2240px;
  overflow: hidden;
  display: flex;
  flex-direction: column;
  font-family: "Open Sans", "DejaVu Sans", sans-serif;
  background:
    linear-gradient(90deg, #a82a4f 0, #a82a4f 60px, #14304e 3500px) top / 100% 120px no-repeat,
    #8a3a64;
}
p, h1, h2 { margin: 0; }
a { color: inherit; text-decoration: none; }
.defs { position: absolute; width: 0; height: 0; }
.money-digit { font: 700 30px "Open Sans", sans-serif; }

/* macOS menu bar */
.menubar {
  height: 50px;
  flex: none;
  display: flex;
  align-items: center;
  padding: 0 0 2px 44px;
  color: #f2f1f6;
  font-family: Roboto, "Liberation Sans", sans-serif;
  font-size: 27px;
  background: linear-gradient(90deg, #8a5b8c 0, #7b66a0 560px, #4f82b8 1300px, #336fa9 2200px, #2a6aa6 100%);
  border-bottom: 2px solid;
  border-image: linear-gradient(90deg, #b02a50 0, #b02a50 680px, #14304e 680px, #14304e 100%) 1;
}
.apple { width: 26px; height: 32px; margin-right: 45px; }
.menus { display: flex; gap: 41.500px; }
.menu-app { font-weight: 700; letter-spacing: .5px; }
.status-icons { margin-left: auto; display: flex; align-items: center; padding-right: 38px; }
.status-left { display: flex; align-items: center; gap: 42px; margin-right: 42px; }
.status-right { display: flex; align-items: center; gap: 37px; margin-right: 32px; }
.input-source { display: flex; align-items: center; gap: 11px; }
.si { height: 32px; flex: none; }
.w22 { width: 22px; } .w26 { width: 26px; } .w28 { width: 28px; } .w30 { width: 30px; }
.w32 { width: 32px; } .w34 { width: 34px; } .w36 { width: 36px; } .w50 { width: 50px; }
.si-a { width: 32px; height: 32px; background: #eef2f6; color: #2a6aa6; border-radius: 3px; text-align: center; line-height: 32px; font-size: 26px; }
.si-abc { width: 43px; font-size: 22px; white-space: nowrap; }
.clock { font-size: 27.500px; white-space: nowrap; }

/* Browser window */
.window {
  position: relative;
  flex: none;
  height: 2026px;
  display: flex;
  flex-direction: column;
  border-radius: 18px 18px 18px 0;
  overflow: hidden;
  background: #fff;
}
.tabstrip {
  height: 84px;
  flex: none;
  background: #dfe0e4;
  display: flex;
  align-items: flex-end;
  font-family: Roboto, "Liberation Sans", sans-serif;
}
.lights { width: 188px; height: 100%; flex: none; display: flex; align-items: center; gap: 16px; padding-left: 42px; }
.light { width: 24px; height: 24px; border-radius: 50%; }
.red { background: #ec6a5e; } .amber { background: #f5bf4f; } .green { background: #62c554; }
.tab {
  position: relative;
  width: 315.200px;
  height: 68px;
  flex: none;
  display: flex;
  align-items: center;
  padding: 0 0 0 26px;
  color: #3c4043;
  font-size: 24px;
}
.tab-active { background: #fff; border-radius: 18px 18px 0 0; color: #202124; }
.tab-active::before, .tab-active::after {
  content: "";
  position: absolute;
  bottom: 0;
  width: 16px;
  height: 16px;
}
.tab-active::before { left: -16px; background: radial-gradient(circle at 0 0, transparent 16px, #fff 16.500px); }
.tab-active::after { right: -16px; background: radial-gradient(circle at 100% 0, transparent 16px, #fff 16.500px); }
.tab-sep::after {
  content: "";
  position: absolute;
  right: 0;
  top: 15px;
  width: 2px;
  height: 39px;
  background: #9fa1a6;
}
.fav { width: 28px; height: 28px; flex: none; margin-right: 19px; }
.tab-title {
  width: 190px;
  flex: none;
  white-space: nowrap;
  -webkit-mask-image: linear-gradient(90deg, #000 80%, transparent 99%);
  mask-image: linear-gradient(90deg, #000 80%, transparent 99%);
}
.tab-rtl {
  font-family: "DejaVu Sans", Roboto, sans-serif;
  font-size: 22px;
  text-align: right;
  -webkit-mask-image: linear-gradient(270deg, #000 78%, transparent 99%);
  mask-image: linear-gradient(270deg, #000 78%, transparent 99%);
}
.tab-x { margin-left: 14px; font-size: 24px; width: 18px; text-align: center; }
.tab-plus { margin: 0 0 8px 30px; font-size: 50px; font-weight: 400; line-height: 56px; color: #3c4043; }
.tab-menu { width: 28px; height: 28px; margin: 0 31px 28px auto; border-radius: 50%; background: #3c4043; display: flex; align-items: center; justify-content: center; }
.tab-menu-caret { width: 0; height: 0; border-left: 7px solid transparent; border-right: 7px solid transparent; border-top: 10px solid #fff; }

.toolbar {
  height: 74px;
  flex: none;
  display: flex;
  align-items: flex-start;
  padding: 8px 0 0 32px;
  border-bottom: 2px solid #cfd0d4;
  background: #fff;
}
.tb { height: 30px; flex: none; }
.tb-nav { width: 30px; margin: 13px 33px 0 0; }
.omnibox {
  width: 2702px;
  height: 56px;
  margin-left: -5px;
  flex: none;
  display: flex;
  align-items: center;
  border-radius: 28px;
  background: #f1f3f4;
  padding-left: 27px;
  font-family: Roboto, "Liberation Sans", sans-serif;
  font-size: 29.400px;
  color: #5f6368;
}
.lock { width: 20px; height: 26px; flex: none; margin-right: 21px; }
.url { white-space: nowrap; }
.url-host { font-weight: 400; color: #202124; }
.omni-actions { margin-left: auto; display: flex; align-items: center; gap: 36px; padding-right: 19px; }
.extensions { display: flex; align-items: center; height: 56px; padding-left: 29px; gap: 32px; }
.ext { width: 32px; height: 32px; flex: none; }
.avatar { width: 44px; height: 44px; margin-left: -6px; border-radius: 50%; background: #e25c30; color: #fff; display: flex; align-items: center; justify-content: center; font: 24px Roboto, sans-serif; }
.kebab { display: flex; flex-direction: column; gap: 5px; margin-left: 7px; }
.kebab i { width: 6px; height: 6px; border-radius: 50%; background: #5f6368; }

/* Admin header */
.topbar {
  height: 80px;
  flex: none;
  background: #535966;
  display: flex;
  align-items: center;
  justify-content: space-between;
  padding: 0 94px 0 32px;
}
.logo {
  position: relative;
  font: 800 58px/80px "Open Sans", sans-serif;
  letter-spacing: -2px;
  color: #0000ee;
  margin-top: 14px;
}
.logo::after {
  content: "";
  position: absolute;
  right: 0;
  top: 19px;
  width: 66px;
  height: 10px;
  background: #0000ee;
}
.topbar-right { display: flex; align-items: center; margin-top: -3px; }
.bell { position: relative; width: 56px; height: 56px; margin: 3px 43px 0 0; }
.bell svg { width: 56px; height: 56px; display: block; }
.bell-count {
  position: absolute;
  top: -8px;
  right: -9px;
  width: 30px;
  height: 30px;
  border-radius: 50%;
  background: #b9b9b9;
  color: #fff;
  font-size: 21px;
  font-style: italic;
  line-height: 30px;
  text-align: center;
}
.ip { color: #fff; font-size: 21.500px; font-style: italic; margin: 2px 42px 0 0; }
.top-link { color: #c9c9c9; font-size: 21px; font-weight: 600; }
.top-link + .top-link { margin-left: 40px; }
.chev-sm { width: 14px; height: 8px; margin-left: 8px; vertical-align: middle; }
.caret { display: inline-block; width: 0; height: 0; border-left: 6px solid transparent; border-right: 6px solid transparent; border-top: 8px solid #c9c9c9; vertical-align: middle; }

/* Page */
.page { position: relative; flex: 1; min-height: 0; display: flex; overflow: hidden; }
.sidebar { width: 376px; flex: none; background: #f3f3f3; }
.search { height: 99px; padding: 23px 18px 0; background: #e4e5e7; }
.search-box {
  height: 53px;
  background: #fff;
  display: flex;
  align-items: center;
  justify-content: space-between;
  padding: 0 30px 5px 8px;
  color: #8c949c;
  font-size: 23px;
  box-shadow: 0 4px 8px rgba(0,0,0,.05);
}
.search-box svg { width: 24px; height: 22px; margin-top: 10px; }
.nav-item {
  display: block;
  padding: 9.600px 8px 9.600px 25px;
  font-size: 22.500px;
  line-height: 32px;
  color: #555;
}
.nav-item svg { width: 30px; height: 24px; margin-right: 15px; color: #b1b9c2; fill: currentColor; vertical-align: -3px; }
.nav-hover { background: #e4e5e7; }
.nav-active { background: #f5b13b; }

.content { flex: 1; min-width: 0; padding: 0 9px 0 32px; }
.crumbs {
  height: 57px;
  display: flex;
  align-items: center;
  padding-top: 2px;
  border-bottom: 2px solid #e5e5e5;
  color: #666;
  font-size: 21px;
}
.home { width: 14px; height: 16px; margin: 0 9px 0 4px; }
.crumb-sep { width: 8px; height: 14px; margin: 0 21px 0 18px; }
.title {
  height: 96px;
  padding-left: 31px;
  border-bottom: 2px solid #e5e5e5;
  font-size: 45px;
  font-weight: 400;
  line-height: 92px;
  color: #5e5e5e;
}
.reports { height: 190px; display: flex; border-bottom: 2px solid #e5e5e5; }
.report-links { width: 1080px; flex: none; padding: 23px 0 0 25px; display: flex; flex-direction: column; }
.report-links a { font-size: 48px; font-weight: 700; line-height: 68px; color: #6a9bcf; }
.box-name {
  width: 320px;
  height: 92px;
  margin-top: 55px;
  border: 8px solid #e73223;
  text-align: center;
  font: 700 39px/54px "DejaVu Sans", sans-serif;
  color: #666;
}
.filters { height: 161px; padding: 79px 0 24px 24px; display: flex; border-bottom: 2px solid #e5e5e5; }
.date {
  height: 56px;
  padding: 0 16px;
  background: #eee;
  border: 2px solid #e5e5e5;
  border-radius: 6px;
  font: 21px "Open Sans", sans-serif;
  color: #333;
}
.date-a { width: 456px; margin-right: 48px; }
.date-b { width: 504px; }

.cards {
  margin-top: 80px;
  display: grid;
  grid-template-columns: repeat(4, 750px);
  column-gap: 48px;
  row-gap: 89px;
  align-items: start;
}
.card {
  position: relative;
  display: flex;
  flex-direction: column;
  background: var(--tone);
  text-align: center;
  color: rgba(255,255,255,.82);
}
.wide { grid-column: span 2; }
.navy { --tone: #3a4a5f; }
.blue { --tone: #417eb4; }
.green { --tone: #4aa085; }
.red { --tone: #d75543; }
.orange { --tone: #e5a03b; }
.purple { --tone: #8249a5; }
.h252 { height: 252px; } .h253 { height: 253px; } .h254 { height: 254px; }
.h255 { height: 255px; } .h318 { height: 318px; }
.coin {
  position: absolute;
  left: 50%;
  top: -64px;
  width: 128px;
  height: 128px;
  margin-left: -64px;
  border: 4px solid rgba(255,255,255,.3);
  border-radius: 50%;
  background: var(--tone);
  color: var(--tone);
  display: flex;
  align-items: center;
  justify-content: center;
}
.coin svg { width: 68px; height: 46px; margin-top: 4px; }
.card-body { flex: 1; min-height: 0; padding-top: 78px; }
.card-title { font-size: 21px; line-height: 32.500px; font-weight: 400; }
.line { font-size: 22.200px; line-height: 33.600px; font-weight: 700; }
.big { font-size: 39.500px; line-height: 50px; font-weight: 700; }
.selected { background: #6b90bd; color: #e6f0fa; }
.card-foot, .card-corner {
  display: block;
  height: 44px;
  flex: none;
  background: rgba(0,0,0,.1);
  font-size: 21px;
  line-height: 44px;
  color: rgba(255,255,255,.58);
}
.card-corner { position: absolute; right: 0; top: 0; width: 384px; }
.card-foot svg, .card-corner svg { width: 20px; height: 20px; vertical-align: -3px; color: rgba(255,255,255,.6); --chev: var(--tone); }

.lang-row { margin-top: 24px; padding: 18px 0; border-top: 2px solid #e5e5e5; border-bottom: 2px solid #e5e5e5; }
.lang-select { position: relative; width: 251px; height: 53px; }
.lang {
  width: 100%;
  height: 100%;
  padding: 0 0 0 26px;
  appearance: none;
  -webkit-appearance: none;
  background: #fff;
  border: 2px solid #e5e5e5;
  border-radius: 6px;
  font: 22px "Open Sans", sans-serif;
  color: #333;
}
.lang-select svg { position: absolute; right: 8px; top: 18px; width: 16px; height: 16px; pointer-events: none; }
.list-title { margin: 6px 0 0 23px; font-size: 45px; font-weight: 400; line-height: 62px; color: #4c4c4c; }

.bottom-fade {
  position: absolute;
  left: 0; right: 0; bottom: 0;
  height: 76px;
  background: linear-gradient(180deg, rgba(225,225,225,0), rgba(215,215,215,.85));
  pointer-events: none;
}
.statusbar {
  position: absolute;
  left: 0;
  bottom: 0;
  width: 1192px;
  height: 42px;
  padding-left: 9px;
  background: #d3d4d8;
  border-top: 2px solid #b9babd;
  border-right: 2px solid #c4c5c8;
  border-radius: 0 8px 0 0;
  font: 25.200px/38px Roboto, "Liberation Sans", sans-serif;
  color: #2f3033;
  white-space: nowrap;
}

/* Desktop and dock */
.desk {
  flex: 1;
  min-height: 0;
  padding-top: 1px;
  background:
    radial-gradient(ellipse 170px 150px at 100% 0, #82305a, transparent),
    radial-gradient(ellipse 180px 130px at 0 0, #0a1526, transparent),
    linear-gradient(100deg, #16304f 0, #1d3d66 300px, #2d4270 1400px, #3a3f6c 2700px, #4a3e6e 3584px);
}
.dock {
  width: 3359px;
  height: 153px;
  margin-left: 113px;
  padding: 23px 0 0 3px;
  display: flex;
  align-items: flex-start;
  border: 2px solid rgba(255,255,255,.12);
  border-width: 0 2px 5px 2px;
  border-radius: 44px;
  background: linear-gradient(90deg, #627fab 0, #6c7ca9 1000px, #7b7aac 1800px, #8c77a8 2500px, #a36fa0 3359px);
}
.slot { position: relative; width: 129.600px; height: 98px; flex: none; display: flex; justify-content: center; }
.app { width: 98px; height: 98px; display: block; flex: none; overflow: visible; }
.app-fox { width: 106px; height: 110px; margin-top: -8px; }
.app-trash { width: 86px; height: 116px; margin-top: -16px; }
.running::after {
  content: "";
  position: absolute;
  left: 50%;
  top: 114px;
  width: 6px;
  height: 7px;
  margin-left: -3px;
  border-radius: 50%;
  background: #05053f;
}
.dock-div { width: 54px; height: 112px; margin-top: -4px; flex: none; display: flex; justify-content: center; }
.dock-div::before { content: ""; width: 1px; background: #5a4f80; }
.skype { position: relative; width: 98px; height: 98px; }
.dock-badge {
  position: absolute;
  top: -11px;
  right: -19px;
  width: 46px;
  height: 46px;
  border-radius: 50%;
  background: #e2504a;
  color: #fff;
  font: 30px/46px Roboto, sans-serif;
  text-align: center;
}
.skype-s { font: 700 72px "Open Sans", sans-serif; fill: #fff; }
.cal-month { font: 700 20px Roboto, sans-serif; fill: #fff; }
.cal-day { font: 300 58px Roboto, sans-serif; fill: #222; }
.pages-quote { font: 700 54px "Liberation Serif", serif; fill: #f0a33a; }
.dock-shield { font: 700 16px Roboto, sans-serif; fill: #fff; }
.term { font: 700 32px "Liberation Mono", monospace; fill: #fff; }
```
